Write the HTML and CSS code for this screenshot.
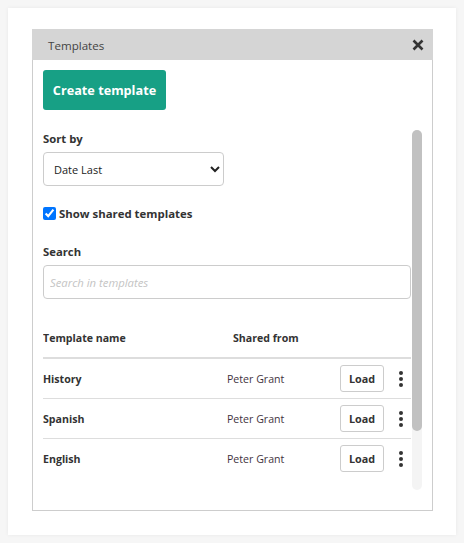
FILE: index.html
```html
<!DOCTYPE html>
<html>
<head>
<meta charset="utf-8">
<link rel="stylesheet" href="styles.css">
</head>
<body>
<div class="card">
  <div class="dialog">
    <div class="dlg-head">
      <span class="dlg-title">Templates</span>
      <span class="dlg-close">
        <svg width="12" height="12" viewBox="0 0 12 12"><path d="M1.5 1.5 L10.5 10.5 M10.5 1.5 L1.5 10.5" stroke="#333" stroke-width="2.6" stroke-linecap="butt"/></svg>
      </span>
    </div>
    <div class="dlg-body">
      <button class="btn-create">Create template</button>
      <div class="scroll-area">
        <div class="scroll-content">
          <div class="field-label">Sort by</div>
          <select class="sort-select">
            <option>Date Last</option>
            <option>Date First</option>
            <option>Name</option>
          </select>
          <label class="check-row"><input type="checkbox" checked class="check"><span>Show shared templates</span></label>
          <div class="field-label search-label">Search</div>
          <input class="search" type="text" placeholder="Search in templates">
          <div class="table">
            <div class="thead">
              <div class="c-name">Template name</div>
              <div class="c-shared h-shared">Shared from</div>
            </div>
            <div class="trow">
              <div class="c-name">History</div>
              <div class="c-shared">Peter Grant</div>
              <button class="btn-load">Load</button>
              <div class="kebab"><i></i><i></i><i></i></div>
            </div>
            <div class="trow">
              <div class="c-name">Spanish</div>
              <div class="c-shared">Peter Grant</div>
              <button class="btn-load">Load</button>
              <div class="kebab"><i></i><i></i><i></i></div>
            </div>
            <div class="trow last">
              <div class="c-name">English</div>
              <div class="c-shared">Peter Grant</div>
              <button class="btn-load">Load</button>
              <div class="kebab"><i></i><i></i><i></i></div>
            </div>
          </div>
        </div>
        <div class="scrollbar"><div class="thumb"></div></div>
      </div>
    </div>
  </div>
</div>
</body>
</html>
```
FILE: styles.css
```css
html, body {
  margin: 0;
  padding: 0;
}
body {
  background: #f6f6f6;
  padding: 8px;
  font-family: "Open Sans", "Liberation Sans", sans-serif;
  color: #333;
}
.card {
  width: 448px;
  height: 527px;
  box-sizing: border-box;
  background: #fff;
  box-shadow: 0 0 4px rgba(0,0,0,0.06);
  padding: 21px 23px 0 24px;
}
.dialog {
  width: 401px;
  height: 482px;
  box-sizing: border-box;
  border: 1px solid #cdcdcd;
  border-top: none;
  display: flex;
  flex-direction: column;
}
.dlg-head {
  height: 31px;
  background: #d5d5d5;
  margin: 0 -1px;
  display: flex;
  align-items: center;
  justify-content: space-between;
  padding: 0 9px 0 16px;
  flex: none;
}
.dlg-title {
  font-size: 11.6px;
  color: #444;
  padding-top: 1px;
}
.dlg-close {
  display: flex;
  align-items: center;
}
.dlg-body {
  flex: 1;
  padding: 10px 10px 0 10px;
  display: flex;
  flex-direction: column;
}
.btn-create {
  align-self: flex-start;
  width: 123px;
  height: 40px;
  background: #17a085;
  border: none;
  border-radius: 3px;
  color: #fff;
  font-family: inherit;
  font-weight: 700;
  font-size: 12.7px;
  padding: 0;
}
.scroll-area {
  margin-top: 20px;
  height: 360px;
  display: flex;
  gap: 1px;
}
.scroll-content {
  width: 368px;
  flex: none;
  overflow: hidden;
}
.scrollbar {
  width: 10px;
  height: 360px;
  background: #f4f4f4;
  border-radius: 5px;
  flex: none;
}
.thumb {
  height: 301px;
  background: #c1c1c1;
  border-radius: 5px;
}
.field-label {
  font-size: 11.3px;
  font-weight: 700;
  line-height: 17px;
  color: #333;
}
.sort-select {
  display: block;
  margin-top: 5px;
  width: 181px;
  height: 34px;
  border: 1px solid #ccc;
  border-radius: 4px;
  background: #fff;
  font-family: inherit;
  font-size: 11px;
  color: #222;
  padding: 0 6px;
}
.check-row {
  display: flex;
  align-items: center;
  margin-top: 19px;
  font-size: 11.4px;
  font-weight: 700;
  line-height: 17px;
}
.check {
  margin: 0 3px 0 0;
  width: 13px;
  height: 13px;
}
.search-label {
  margin-top: 21px;
}
.search {
  display: block;
  box-sizing: border-box;
  margin-top: 5px;
  width: 368px;
  height: 34px;
  border: 1px solid #ccc;
  border-radius: 4px;
  padding: 0 6px;
  font-family: inherit;
  font-size: 11.3px;
}
.search::placeholder {
  color: #c4c4c4;
  font-style: italic;
}
.table {
  width: 368px;
  margin-top: 31px;
}
.thead {
  display: flex;
  align-items: center;
  line-height: 17px;
  padding-bottom: 10px;
  border-bottom: 2px solid #ddd;
  font-size: 10.6px;
  font-weight: 700;
}
.trow {
  display: flex;
  align-items: center;
  height: 39px;
  border-bottom: 1px solid #ddd;
  font-size: 10.6px;
}
.trow.last {
  border-bottom: none;
}
.c-name {
  width: 184px;
  flex: none;
}
.trow .c-name {
  font-weight: 700;
}
.c-shared {
  width: 113px;
  flex: none;
  color: #3f3340;
}
.h-shared {
  padding-left: 6px;
  box-sizing: border-box;
  color: #333;
}
.btn-load {
  width: 44px;
  height: 27px;
  box-sizing: border-box;
  border: 1px solid #ccc;
  border-radius: 3px;
  background: #fff;
  font-family: inherit;
  font-size: 10.8px;
  font-weight: 700;
  color: #333;
  padding: 0;
}
.kebab {
  flex: 1;
  display: flex;
  flex-direction: column;
  align-items: center;
  gap: 2px;
  padding-left: 6px;
}
.kebab i {
  display: block;
  width: 4px;
  height: 4px;
  border-radius: 50%;
  background: #333;
}
```
